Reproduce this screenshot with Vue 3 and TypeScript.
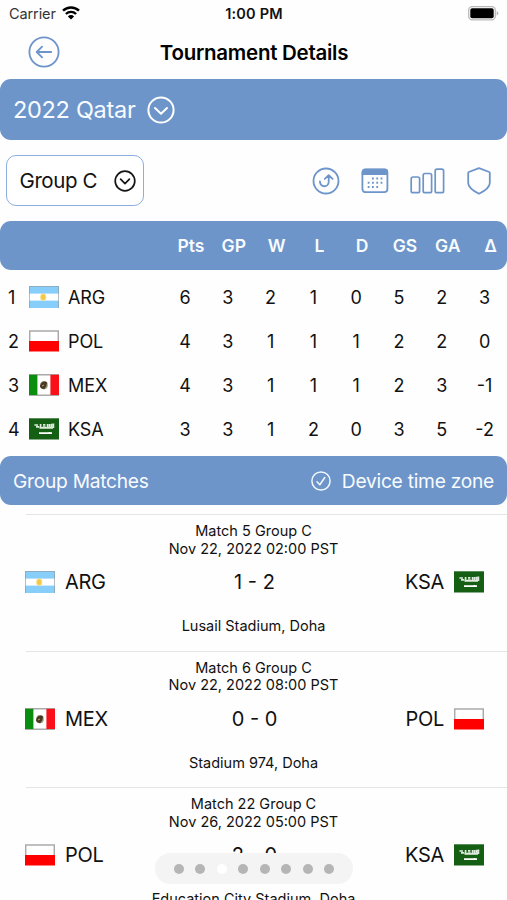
<script setup lang="ts">
import { ref } from 'vue'
import type { FunctionalComponent } from 'vue'
import { h } from 'vue'

type Team = 'ARG' | 'POL' | 'MEX' | 'KSA'

interface Standing {
  team: Team
  stats: number[]
}

interface Match {
  title: string
  date: string
  home: Team
  away: Team
  score: string
  venue: string
}

const columns = ['Pts', 'GP', 'W', 'L', 'D', 'GS', 'GA', 'Δ']

const standings: Standing[] = [
  { team: 'ARG', stats: [6, 3, 2, 1, 0, 5, 2, 3] },
  { team: 'POL', stats: [4, 3, 1, 1, 1, 2, 2, 0] },
  { team: 'MEX', stats: [4, 3, 1, 1, 1, 2, 3, -1] },
  { team: 'KSA', stats: [3, 3, 1, 2, 0, 3, 5, -2] },
]

const matches: Match[] = [
  { title: 'Match 5 Group C', date: 'Nov 22, 2022 02:00 PST', home: 'ARG', away: 'KSA', score: '1 - 2', venue: 'Lusail Stadium, Doha' },
  { title: 'Match 6 Group C', date: 'Nov 22, 2022 08:00 PST', home: 'MEX', away: 'POL', score: '0 - 0', venue: 'Stadium 974, Doha' },
  { title: 'Match 22 Group C', date: 'Nov 26, 2022 05:00 PST', home: 'POL', away: 'KSA', score: '2 - 0', venue: 'Education City Stadium, Doha' },
]

const pageCount = 8
const currentPage = ref(3)

const rect = (x: number, y: number, width: number, height: number, fill: string) =>
  h('rect', { x, y, width, height, fill })

const flagArt: Record<Team, () => ReturnType<typeof h>[]> = {
  ARG: () => [
    rect(0, 0, 30, 22, '#fff'),
    rect(0, 0, 30, 7.6, '#87cefa'),
    rect(0, 14.6, 30, 7.4, '#87cefa'),
    h('ellipse', { cx: 14.2, cy: 11.2, rx: 3, ry: 3.6, fill: '#f7d774' }),
    h('ellipse', { cx: 14.2, cy: 11.2, rx: 1.8, ry: 2.6, fill: '#f2c744' }),
    h('path', { d: 'M.5 22V.5h29V22', fill: 'none', stroke: '#8e9aa3', 'stroke-opacity': 0.65 }),
  ],
  POL: () => [
    rect(0, 0, 30, 11, '#fff'),
    h('path', { d: 'M.6 11V1h28.8v10', fill: 'none', stroke: '#aaa', 'stroke-width': 1.7 }),
    rect(0, 11, 30, 10.5, '#f00'),
  ],
  MEX: () => [
    rect(0, 0, 30, 22, '#fff'),
    h('path', { d: 'M0 .8h30M0 21.2h30', stroke: '#aaa', 'stroke-width': 1.6 }),
    rect(0, 0.8, 8.4, 20.2, '#098e0d'),
    rect(21.4, 0.8, 8.6, 20.2, '#f91018'),
    h('ellipse', { cx: 15, cy: 11.2, rx: 3.8, ry: 4.1, fill: '#95a57f' }),
    h('path', { d: 'M11.8 9.8q3.2-4 6.4-1l-1 3.4-2 3-3.2-1-1-2z', fill: '#4c3624' }),
    h('path', { d: 'M13 12l2-1', stroke: '#b8a56d' }),
  ],
  KSA: () => [
    rect(0, 0.3, 30, 21.2, '#145f14'),
    h('path', {
      d: 'M5.4 7h3.6M7 8.8h3.2M11.6 6v3.6M13.6 9.2h3.2M14 6.8h2.4M18.6 6v3.6M20.6 6v3.6M22.6 5.8v4M24.4 5.6v4.4M10.5 9.8h13.5',
      stroke: '#dfeadf', 'stroke-width': 1.7, fill: 'none',
    }),
    h('path', { d: 'M10 15.2h13M20.5 14v1.5', stroke: '#fff', 'stroke-width': 1.8 }),
  ],
}

const FlagIcon: FunctionalComponent<{ team: Team }> = (props) =>
  h('svg', { width: 30, height: 22, viewBox: '0 0 30 22' }, flagArt[props.team]())
FlagIcon.props = ['team']
</script>

<template>
  <main class="screen">
    <div class="status">
      <div class="carrier">
        <span>Carrier</span>
        <svg width="18" height="14" viewBox="0 0 18 14">
          <path d="M1 4.7a11.5 11.5 0 0 1 16 0" fill="none" stroke="#000" stroke-width="2.5" />
          <path d="M3.9 8a7.2 7.2 0 0 1 10.2 0" fill="none" stroke="#000" stroke-width="2.3" />
          <path d="M9 13.5 5.9 10.4a4.4 4.4 0 0 1 6.2 0z" />
        </svg>
      </div>
      <time class="clock">1:00 PM</time>
      <svg class="battery" width="31" height="15" viewBox="0 0 31 15">
        <rect x=".7" y=".7" width="26.6" height="13.1" rx="3.5" fill="#fff" stroke="#b9b9b9" stroke-width="1.3" />
        <rect x="2.3" y="2.3" width="23.4" height="9.9" rx="1.8" />
        <path d="M28.7 5v4.7q1.7-.8 1.7-2.35T28.7 5" fill="#b5b5b5" />
      </svg>
    </div>

    <header class="nav">
      <svg class="back" width="32" height="32" viewBox="0 0 32 32" fill="none" stroke="#6d95c9" stroke-width="1.8">
        <circle cx="16" cy="16" r="14.6" />
        <path d="M23.2 16H9M14.1 10.6 8.7 16l5.4 5.4" stroke-linecap="round" stroke-linejoin="round" />
      </svg>
      <h1>Tournament Details</h1>
    </header>

    <section class="bar tournament">
      <span>2022 Qatar</span>
      <svg width="28" height="28" viewBox="0 0 28 28" fill="none" stroke="#fff" stroke-width="2">
        <circle cx="14" cy="14" r="12.6" />
        <path d="m8 12 6 5.7 6-5.7" stroke-linecap="round" stroke-linejoin="round" />
      </svg>
    </section>

    <section class="tools">
      <button class="group" type="button">
        <span>Group C</span>
        <svg width="22" height="22" viewBox="0 0 22 22" fill="none" stroke="#161616" stroke-width="1.7">
          <circle cx="11" cy="11" r="9.8" />
          <path d="m6.6 9.2 4.4 4.5 4.4-4.5" stroke-linecap="round" stroke-linejoin="round" />
        </svg>
      </button>
      <div class="actions">
        <svg width="28" height="28" viewBox="0 0 28 28" fill="none" stroke="#6d95c9" stroke-width="1.8" stroke-linecap="round" stroke-linejoin="round">
          <circle cx="14" cy="14" r="12.5" />
          <path d="M7.9 14.3c.4 6.7 8.7 6.4 8.8.4V8.6M12.8 11.8l3.9-3.6 3.9 3.6" />
        </svg>
        <svg width="28" height="26" viewBox="0 0 28 26">
          <rect x="1.4" y="1.4" width="25" height="22.8" rx="3.2" fill="none" stroke="#6d95c9" stroke-width="1.8" />
          <path d="M.8 7.1V4Q.8.7 4 .7h19.8Q27 .7 27 4v3.1z" fill="#6d95c9" />
          <path d="M11 10.5h12M6.7 14.7H23M6.7 18.9h12" stroke="#6d95c9" stroke-width="2" stroke-dasharray="1.8 2.5" />
        </svg>
        <svg width="35" height="26" viewBox="0 0 35 26" fill="none" stroke="#6d95c9" stroke-width="1.7">
          <rect x="1.2" y="9" width="8.4" height="15.7" rx="1.8" />
          <rect x="13.2" y="5.5" width="8.4" height="19.2" rx="1.8" />
          <rect x="25.2" y="1.2" width="8.4" height="23.5" rx="1.8" />
        </svg>
        <svg class="shield" width="24" height="28" viewBox="0 0 24 28" fill="none" stroke="#6d95c9" stroke-width="1.8" stroke-linejoin="round">
          <path d="M12 1.2 22.2 5q.6.3.6 1v10q0 5.4-10.8 10.8Q1.2 21.4 1.2 16V6q0-.7.6-1z" />
        </svg>
      </div>
    </section>

    <section class="bar columns">
      <span v-for="name in columns" :key="name">{{ name }}</span>
    </section>

    <section class="standings">
      <div v-for="(row, index) in standings" :key="row.team" class="row">
        <span class="rank">{{ index + 1 }}</span>
        <FlagIcon :team="row.team" />
        <span class="code">{{ row.team }}</span>
        <span v-for="(value, i) in row.stats" :key="i" class="stat">{{ value }}</span>
      </div>
    </section>

    <section class="bar matches-bar">
      <span class="matches-title">Group Matches</span>
      <div class="zone">
        <svg width="20" height="20" viewBox="0 0 20 20" fill="none" stroke="#f3f8ff" stroke-width="1.5">
          <circle cx="10" cy="10" r="9.1" />
          <path d="m6 10.7 2.8 3 5-7.2" stroke-linecap="round" stroke-linejoin="round" />
        </svg>
        <span>Device time zone</span>
      </div>
    </section>

    <section class="matches">
      <article v-for="match in matches" :key="match.title" class="match">
        <p class="meta">{{ match.title }}<br />{{ match.date }}</p>
        <div class="teams">
          <div class="team"><FlagIcon :team="match.home" /><span>{{ match.home }}</span></div>
          <span class="score">{{ match.score }}</span>
          <div class="team away"><span>{{ match.away }}</span><FlagIcon :team="match.away" /></div>
        </div>
        <p class="venue">{{ match.venue }}</p>
      </article>
    </section>

    <nav class="pager">
      <i v-for="page in pageCount" :key="page" :class="{ active: page === currentPage }"></i>
    </nav>
  </main>
</template>

<style>
body {
  background: #fefefe;
  overflow: hidden;
}
</style>

<style scoped>
* {
  box-sizing: border-box;
}
.screen {
  position: relative;
  width: 507px;
  height: 900px;
  overflow: hidden;
  background: #fefefe;
  color: #111;
  font-family: Inter, "Liberation Sans", sans-serif;
  display: flex;
  flex-direction: column;
}
.screen > * {
  flex-shrink: 0;
}
svg {
  display: block;
  flex-shrink: 0;
}
.status {
  height: 28px;
  display: grid;
  grid-template-columns: 1fr auto 1fr;
  align-items: center;
  padding: 0 8px 0 9px;
  font-size: 14.5px;
}
.carrier {
  display: flex;
  align-items: center;
  gap: 6px;
  margin-top: -2px;
  color: #333;
  letter-spacing: -0.1px;
}
.clock {
  margin-top: -2px;
  color: #111;
  font-weight: 600;
  letter-spacing: 0.2px;
}
.battery {
  justify-self: end;
  margin-top: -1px;
}
.nav {
  height: 51px;
  display: grid;
  grid-template-columns: 100px 1fr 100px;
  align-items: center;
  padding-bottom: 3px;
}
.back {
  margin-left: 28px;
}
h1 {
  margin: 0;
  padding-left: 1px;
  text-align: center;
  font-size: 20.5px;
  font-weight: 600;
  letter-spacing: -0.27px;
  color: #000;
}
.bar {
  background: #6d95c9;
  color: #f8fbff;
  border-radius: 11px;
  display: flex;
  align-items: center;
}
.tournament {
  height: 61px;
  padding-left: 13px;
  gap: 12px;
  font-size: 23.5px;
  letter-spacing: -0.3px;
}
.tools {
  height: 81px;
  padding: 0 16px 0 6px;
  display: flex;
  align-items: center;
  justify-content: space-between;
}
.group {
  width: 138px;
  height: 51px;
  padding: 0 7px 0 12.5px;
  border: 1.5px solid #8cade0;
  border-radius: 10px;
  background: #fff;
  display: flex;
  align-items: center;
  justify-content: space-between;
  font: inherit;
  font-size: 20.5px;
  letter-spacing: -0.4px;
  color: #111;
}
.actions {
  display: flex;
  align-items: center;
  gap: 21px;
}
.shield {
  margin-left: 1.5px;
}
.columns {
  height: 49px;
  padding-left: 169.6px;
  font-size: 17.5px;
  font-weight: 600;
  overflow: hidden;
}
.columns span {
  flex: 0 0 42.8px;
  text-align: center;
}
.standings {
  height: 186px;
  padding-top: 5px;
}
.row {
  height: 44px;
  display: grid;
  grid-template-columns: 29px 39px 95.6px repeat(8, 42.8px);
  align-items: center;
  font-size: 18px;
}
.rank {
  padding-left: 8px;
}
.code {
  letter-spacing: -0.1px;
}
.stat {
  text-align: center;
}
.matches-bar {
  height: 49px;
  padding: 0 13px;
  justify-content: space-between;
  font-size: 19.2px;
  letter-spacing: -0.26px;
}
.zone {
  display: flex;
  align-items: center;
  gap: 11px;
}
.matches {
  padding-top: 9px;
}
.match {
  position: relative;
  height: 136.6px;
  margin-left: 26px;
  border-top: 1px solid #e5e5e5;
  display: flex;
  flex-direction: column;
}
.meta {
  margin: 7px 0 0 -26px;
  font-size: 14.5px;
  line-height: 17.5px;
  text-align: center;
}
.teams {
  height: 50px;
  margin-left: -1px;
  padding-right: 23px;
  display: grid;
  grid-template-columns: 1fr auto 1fr;
  align-items: center;
  font-size: 20px;
}
.team {
  display: flex;
  align-items: center;
  gap: 10px;
  letter-spacing: -0.3px;
}
.away {
  justify-content: flex-end;
}
.venue {
  margin: 10px 0 0 -26px;
  font-size: 14.5px;
  line-height: 17px;
  text-align: center;
}
.pager {
  position: absolute;
  left: 155px;
  top: 853px;
  width: 198px;
  height: 31px;
  padding: 0 18.5px;
  border-radius: 16px;
  background: #f4f4f4;
  display: flex;
  align-items: center;
  justify-content: space-between;
}
.pager i {
  width: 10px;
  height: 10px;
  border-radius: 50%;
  background: #b5b5b5;
}
.pager i.active {
  background: #fff;
}
</style>
